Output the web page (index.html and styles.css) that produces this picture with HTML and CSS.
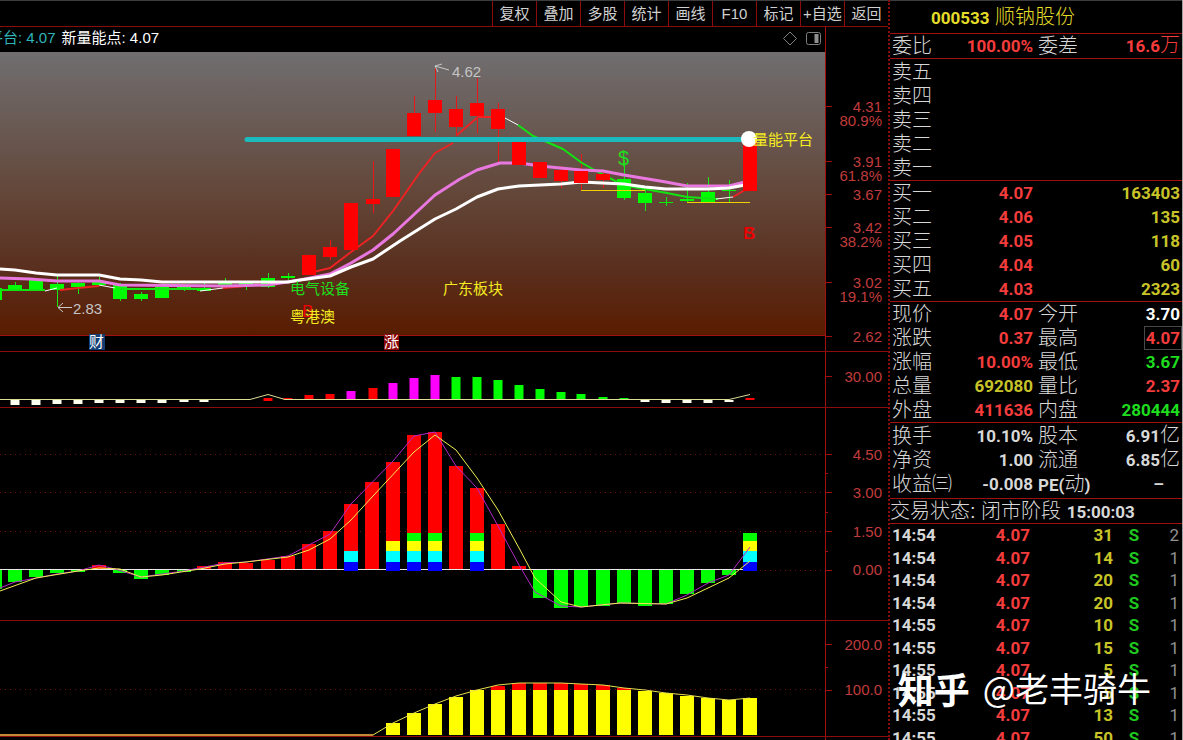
FILE: index.html
```html
<!DOCTYPE html>
<html lang="zh-CN">
<head>
<meta charset="utf-8">
<title>000533 顺钠股份</title>
<link rel="stylesheet" href="styles.css">
</head>
<body>
<div class="terminal">
  <main class="charts">
    <nav class="toolbar">
      <button type="button">复权</button>
      <button type="button">叠加</button>
      <button type="button">多股</button>
      <button type="button">统计</button>
      <button type="button">画线</button>
      <button type="button">F10</button>
      <button type="button">标记</button>
      <button type="button">+自选</button>
      <button type="button">返回</button>
    </nav>

    <section class="pane">
      <div class="plot legend">
        <div class="legend-text"><span class="teal">平台: 4.07</span><span class="bright">新量能点: 4.07</span></div>
        <svg class="legend-icons" width="40" height="16" viewBox="0 0 40 16" fill="none" stroke="#808080">
          <path d="M8 2L14.500 8.500L8 15L1.500 8.500Z"/>
          <rect x="24.500" y="2.500" width="14" height="12" rx="2"/>
          <path d="M34.500 4V13" stroke="#909090" stroke-width="4"/>
        </svg>
      </div>
      <div class="axis"></div>
    </section>

    <section class="pane ruled">
      <div class="plot">
        <svg class="price" viewBox="0 52 825 299" preserveAspectRatio="xMinYMin meet">
          <defs>
            <linearGradient id="sky" x1="0" y1="0" x2="0" y2="1">
              <stop offset="0" stop-color="#706e70"/>
              <stop offset="0.500" stop-color="#634739"/>
              <stop offset="0.750" stop-color="#5a3020"/>
              <stop offset="1" stop-color="#591c00"/>
            </linearGradient>
          </defs>
          <rect x="0" y="52" width="825" height="283" fill="url(#sky)"/>
          <path class="rule" d="M0 335.500H825"/>

          <path class="wick up" d="M330.500 240V260M373.500 161V213M414.500 96V136M435.500 68V132M456.500 96V136M477.500 78V133M498.500 103V163M561.500 166V188M581.500 154V191M603.500 172V188"/>
          <path class="wick down" d="M15.500 282V291M57.500 274V307M78.500 280V294M99.500 277V285M120.500 283V301M141.500 292V301M162.500 286V297M184.500 285V291M204.500 283V291M225.500 278V287M246.500 281V290M268.500 273V288M288.500 273V280M624.500 160V200M645.500 190V211M666.500 197V206M687.500 183V202M708.500 177V203M729.500 180V202"/>
          <path class="thin" stroke="#0e0" d="M659 202.500H673"/>
          <path class="candle" stroke="#0f0" d="M-5 288V300M15 285V291M36 280V291M57 284V290M78 283V287M99 282V285M120 285V299M141 294V299M162 287V298M184 287V290M204 288V291M225 282V285M246 283V285M268 278V287M288 276V278M624 179V198M645 193V203M687 199V201M708 192V202M729 190V191"/>

          <path class="ma" stroke="#e22" d="M309 273L330 268L351 252L373 236L393 211L418 175L435 153L453 143M457 135L478 117L497 117M60 290L78 288L99 286M223 288L246 286M733 197L745 190"/>
          <path class="ma" stroke="#12e412" d="M518 125L533 136L563 149L582 163L600 173L617 182L633 187L667 193L687 197L718 199M0 290H45M120 289H200"/>
          <path class="ma wide" stroke="#e878e0" d="M0 278L30 279L57 281H99L120 285L225 286L268 285L300 280L330 274L351 263L373 250L393 234L435 195L460 179L477 170L500 163H520L540 166L581 170L603 171L624 175L666 182L687 186H729L745 182"/>
          <path class="ma wide" stroke="#fff" d="M0 269L15 270L36 273L57 275H99L120 279L141 280L162 282H288L300 280L330 276L351 267L373 259L400 241L435 219L456 209L477 197L498 189L519 186L561 184L581 182L624 184L645 187L666 189H708L729 188L745 185"/>
          <path class="thin" stroke="#fff" d="M505 118L518 125M45 291L57 288M99 285L115 288M200 291L223 288M716 199L733 197"/>
          <path class="candle" stroke="#f00" d="M309 255V275M330 247V257M351 203V250M373 199V204M393 149V197M414 113V136M435 100V113M456 109V127M477 103V116M498 109V129M519 142V165M540 162V178M561 170V181M581 171V183M603 174V180M750 140V191"/>
          <path class="thin" stroke="#f0d000" d="M581 190.500H645M687 202.500H750"/>
          <path stroke="#1cbabd" stroke-width="5" stroke-linecap="round" d="M247 139.500H744"/>
          <circle cx="749" cy="139" r="8" fill="#fff"/>

          <path class="thin" stroke="#c8c8c8" d="M449 70L435 66M442 64L435 66L438 72M72 307.500H58M63 303L58 307.500L63 312"/>
          <text class="note silver" x="452" y="77">4.62</text>
          <text class="note silver" x="73" y="314">2.83</text>
          <text class="note yellow" x="753" y="145">量能平台</text>
          <text class="signal tall green" x="618" y="165">$</text>
          <text class="signal red" x="743" y="239">B</text>
          <text class="signal red" x="744" y="239">S</text>
          <text class="signal red" x="302" y="317">B</text>
          <text class="note green" x="290" y="294">电气设备</text>
          <text class="note yellow" x="290" y="322">粤港澳</text>
          <text class="note yellow" x="443" y="294">广东板块</text>
          <rect x="89" y="334" width="16" height="16" fill="#123e74"/>
          <text class="note bright" x="89" y="347">财</text>
          <rect x="384" y="334" width="15" height="16" fill="#8c0808"/>
          <text class="note bright" x="384" y="347">涨</text>
        </svg>
      </div>
      <div class="axis">
        <svg class="price" viewBox="0 52 62 299" preserveAspectRatio="xMaxYMin meet">
          <path class="rule" d="M0 106.500H6M0 161.500H6M0 194.500H6M0 227.500H6M0 282.500H6M0 336.500H6"/>
          <text class="tick" x="56" y="112">4.31</text>
          <text class="tick" x="56" y="126">80.9%</text>
          <text class="tick" x="56" y="167">3.91</text>
          <text class="tick" x="56" y="181">61.8%</text>
          <text class="tick" x="56" y="200">3.67</text>
          <text class="tick" x="56" y="233">3.42</text>
          <text class="tick" x="56" y="247">38.2%</text>
          <text class="tick" x="56" y="288">3.02</text>
          <text class="tick" x="56" y="302">19.1%</text>
          <text class="tick" x="56" y="342">2.62</text>
        </svg>
      </div>
    </section>

    <section class="pane ruled">
      <div class="plot">
        <svg class="energy" viewBox="0 352 825 55" preserveAspectRatio="xMinYMin meet">
          <path class="bar" stroke="#fffff0" d="M15 400V405M36 400V405M57 400V404M78 400V404M99 400V403M120 400V403M141 400V403M162 400V403M184 400V402M204 400V402M645 400V402M666 400V403M687 400V403M708 400V403M729 400V402"/>
          <path class="bar" stroke="#f00" d="M268 398V401M288 398V400M309 395V400M330 394V400M373 388V400M750 398V400"/>
          <path class="bar" stroke="#f0f" d="M351 391V400M393 383V400M414 378V400M435 375V400"/>
          <path class="bar" stroke="#0f0" d="M456 377V400M477 377V400M498 380V400M519 385V400M540 389V400M561 392V400M581 394V400M603 397V400M624 398V400"/>
          <path class="thin" stroke="#dcdc96" d="M0 399.500H250L268 394.500L285 399.500H729L750 394.500"/>
        </svg>
      </div>
      <div class="axis">
        <svg class="energy" viewBox="0 352 62 55" preserveAspectRatio="xMaxYMin meet">
          <path class="rule" d="M0 376.500H6"/>
          <text class="tick" x="56" y="382">30.00</text>
        </svg>
      </div>
    </section>

    <section class="pane ruled">
      <div class="plot">
        <svg class="momentum" viewBox="0 408 825 212" preserveAspectRatio="xMinYMin meet">
          <path class="grid" d="M0 454.500H825M0 492.500H825M0 531.500H825M750 570.500H825"/>
          <path class="candle" stroke="#f00" d="M99 565V570M204 566V570M225 562V570M246 563V570M268 560V570M288 556V570M309 544V570M330 531V570M351 504V570M372 482V570M393 462V570M414 435V570M435 432V570M456 466V570M477 488V570M498 524V570M519 566V570"/>
          <path class="candle" stroke="#0f0" d="M-5 570V589M15 570V582M36 570V577M57 570V573M78 570V572M120 570V573M141 570V579M162 570V575M184 570V572M540 570V598M561 570V608M581 570V607M603 570V606M624 570V603M645 570V606M666 570V604M687 570V594M708 570V583M729 570V575"/>
          <path class="thin" stroke="#e8e8e8" d="M0 569.500H750"/>
          <path class="candle" stroke="#00f" d="M351 562V571M393 562V571M414 562V571M435 562V571M477 562V571M750 562V571"/>
          <path class="candle" stroke="#0ff" d="M351 551V562M393 551V562M414 551V562M435 551V562M477 551V562M750 551V562"/>
          <path class="candle" stroke="#ff0" d="M393 541V551M414 541V551M435 541V551M477 541V551M750 541V551"/>
          <path class="candle" stroke="#0f0" d="M414 533V541M435 533V541M477 533V541M750 533V541"/>
          <path class="thin" stroke="#b428c8" d="M0 588L15 582L57 574L78 571L99 565L115 569L141 577L184 571L225 563L246 562L288 556L330 534L351 504L393 461L414 436L435 432L443 445L456 466L477 488L498 526L519 565L535 592L561 606L581 607L620 603L666 604L687 595L708 583L729 575L750 547"/>
          <path class="thin" stroke="#f0f050" d="M0 591L36 578L78 571L99 568L120 569L141 577L162 575L200 569L225 564L246 562L288 557L309 550L330 539L351 520L373 496L414 452L435 435L456 450L477 478L498 510L519 548L535 578L561 602L581 607L620 603L666 604L687 598L729 578L750 561"/>
        </svg>
      </div>
      <div class="axis">
        <svg class="momentum" viewBox="0 408 62 212" preserveAspectRatio="xMaxYMin meet">
          <path class="rule" d="M0 454.500H6M0 473.500H2M0 492.500H6M0 512.500H2M0 531.500H6M0 551.500H2M0 570.500H6"/>
          <text class="tick" x="56" y="460">4.50</text>
          <text class="tick" x="56" y="498">3.00</text>
          <text class="tick" x="56" y="537">1.50</text>
          <text class="tick" x="56" y="575">0.00</text>
        </svg>
      </div>
    </section>

    <section class="pane ruled">
      <div class="plot">
        <svg class="volume" viewBox="0 621 825 115" preserveAspectRatio="xMinYMin meet">
          <path class="grid" d="M0 689.500H825"/>
          <path class="candle" stroke="#f00" d="M498 686V690M519 683V690M540 683V690M561 683V690M581 684V690M603 685V690M624 688V690"/>
          <path class="candle" stroke="#ff0" d="M393 723V735M414 713V735M435 704V735M456 697V735M477 690V735M498 690V735M519 690V735M540 690V735M561 690V735M581 690V735M603 690V735M624 690V735M645 691V735M666 693V735M687 696V735M708 698V735M729 700V735M750 698V735"/>
          <path stroke="#c08a38" stroke-width="2" d="M0 735H373"/>
          <path class="thin" stroke="#e8e050" d="M373 735L393 723L414 713L435 704L456 696L477 690L498 685L519 683H561L581 684L603 685L624 688L645 690L666 693L687 695L708 698L729 700L750 698"/>
        </svg>
      </div>
      <div class="axis">
        <svg class="volume" viewBox="0 621 62 115" preserveAspectRatio="xMaxYMin meet">
          <path class="rule" d="M0 644.500H6M0 667.500H2M0 690.500H6"/>
          <text class="tick" x="56" y="650">200.0</text>
          <text class="tick" x="56" y="695">100.0</text>
        </svg>
      </div>
    </section>
    <section class="pane rest">
      <div class="plot"></div>
      <div class="axis"></div>
    </section>
  </main>

  <aside class="quote">
    <h1 class="stock"><span class="num">000533</span> 顺钠股份</h1>

    <table class="facts">
      <colgroup><col class="c-label"><col class="c-value"><col class="c-label2"><col></colgroup>
      <tbody>
        <tr><th>委比</th><td class="rise">100.00%</td><th>委差</th><td class="rise">16.6<span class="unit">万</span></td></tr>
      </tbody>
    </table>

    <table class="facts sell">
      <tbody>
        <tr><th>卖五</th></tr>
        <tr><th>卖四</th></tr>
        <tr><th>卖三</th></tr>
        <tr><th>卖二</th></tr>
        <tr><th>卖一</th></tr>
      </tbody>
    </table>

    <table class="facts">
      <colgroup><col class="c-label"><col class="c-value"><col></colgroup>
      <tbody>
        <tr><th>买一</th><td class="rise">4.07</td><td class="vol">163403</td></tr>
        <tr><th>买二</th><td class="rise">4.06</td><td class="vol">135</td></tr>
        <tr><th>买三</th><td class="rise">4.05</td><td class="vol">118</td></tr>
        <tr><th>买四</th><td class="rise">4.04</td><td class="vol">60</td></tr>
        <tr><th>买五</th><td class="rise">4.03</td><td class="vol">2323</td></tr>
      </tbody>
    </table>

    <table class="facts">
      <colgroup><col class="c-label"><col class="c-value"><col class="c-label2"><col></colgroup>
      <tbody>
        <tr><th>现价</th><td class="rise">4.07</td><th>今开</th><td class="white">3.70</td></tr>
        <tr><th>涨跌</th><td class="rise">0.37</td><th>最高</th><td class="rise"><span class="boxed">4.07</span></td></tr>
        <tr><th>涨幅</th><td class="rise">10.00%</td><th>最低</th><td class="fall">3.67</td></tr>
        <tr><th>总量</th><td class="vol">692080</td><th>量比</th><td class="rise">2.37</td></tr>
        <tr><th>外盘</th><td class="rise">411636</td><th>内盘</th><td class="fall">280444</td></tr>
      </tbody>
    </table>

    <table class="facts finance">
      <colgroup><col class="c-label"><col class="c-value"><col class="c-label2"><col></colgroup>
      <tbody>
        <tr><th>换手</th><td>10.10%</td><th>股本</th><td>6.91<span class="unit">亿</span></td></tr>
        <tr><th>净资</th><td>1.00</td><th>流通</th><td>6.85<span class="unit">亿</span></td></tr>
        <tr><th>收益㈢</th><td>-0.008</td><th><span class="num">PE(</span>动<span class="num">)</span></th><td class="none">–</td></tr>
      </tbody>
    </table>

    <p class="status">交易状态: 闭市阶段 <span class="num">15:00:03</span></p>

    <table class="ticks">
      <colgroup><col class="t-time"><col class="t-price"><col class="t-vol"><col class="t-side"><col></colgroup>
      <tbody>
        <tr><td>14:54</td><td>4.07</td><td>31</td><td>S</td><td>2</td></tr>
        <tr><td>14:54</td><td>4.07</td><td>14</td><td>S</td><td>1</td></tr>
        <tr><td>14:54</td><td>4.07</td><td>20</td><td>S</td><td>1</td></tr>
        <tr><td>14:54</td><td>4.07</td><td>20</td><td>S</td><td>1</td></tr>
        <tr><td>14:55</td><td>4.07</td><td>10</td><td>S</td><td>1</td></tr>
        <tr><td>14:55</td><td>4.07</td><td>15</td><td>S</td><td>1</td></tr>
        <tr><td>14:55</td><td>4.07</td><td>5</td><td>S</td><td>1</td></tr>
        <tr><td>14:55</td><td>4.07</td><td>5</td><td>S</td><td>1</td></tr>
        <tr><td>14:55</td><td>4.07</td><td>13</td><td>S</td><td>1</td></tr>
        <tr><td>14:55</td><td>4.07</td><td>50</td><td>S</td><td>1</td></tr>
      </tbody>
    </table>
    <div class="watermark"><span class="brand">知乎</span><span>@老丰骑牛</span></div>
  </aside>
</div>
</body>
</html>
```
FILE: styles.css
```css
* { box-sizing: border-box; }

body {
  margin: 0;
  background: #000;
  color: #d8d8d8;
  font-family: "Liberation Sans", "Noto Sans CJK SC", sans-serif;
  font-size: 15px;
}

.terminal {
  display: grid;
  grid-template-columns: minmax(0, 1fr) 295px;
  height: 100vh;
  overflow: hidden;
  box-shadow: inset 0 1px #3c3c3c;
}

.charts {
  display: flex;
  flex-direction: column;
  min-height: 0;
}

/* Toolbar */
.toolbar {
  display: flex;
  justify-content: flex-end;
  flex: none;
  height: 27px;
  padding-top: 1px;
  border-bottom: 1px solid #8a0c0c;
}
.toolbar button {
  width: 44px;
  padding: 0;
  border: 0;
  border-left: 1px solid #8a0c0c;
  background: none;
  color: #d0d0d0;
  font: 400 15px/24px "Liberation Sans", "Noto Sans CJK SC", sans-serif;
  white-space: nowrap;
}

/* Chart panes */
.pane {
  display: grid;
  grid-template-columns: minmax(0, 1fr) 62px;
  flex: none;
}
.plot { border-right: 1px solid #a01010; }
.ruled { border-bottom: 1px solid #8a0c0c; }
.rest { flex: 1; }

.pane svg { display: block; overflow: hidden; }
.price, .energy, .momentum, .volume { width: 100%; }
.price { height: 299px; }
.energy { height: 55px; }
.momentum { height: 212px; }
.volume { height: 115px; }

.legend {
  display: flex;
  justify-content: space-between;
  align-items: center;
  height: 25px;
  padding: 0 3px 4px 0;
  overflow: hidden;
}
.legend-text {
  display: flex;
  gap: 6px;
  margin-left: -12px;
  line-height: 20px;
  white-space: nowrap;
}
.teal { color: #2fb4b8; }
.bright { color: #fff; fill: #fff; }

.rule { stroke: #a01010; fill: none; }
.grid { stroke: #701010; stroke-dasharray: 1 4; fill: none; }
.candle { stroke-width: 14; fill: none; }
.bar { stroke-width: 9; fill: none; }
.wick { stroke-width: 1; fill: none; }
.up { stroke: #e81818; }
.down { stroke: #18e818; }
.thin { stroke-width: 1; fill: none; }
.ma { stroke-width: 2; fill: none; stroke-linejoin: round; }
.wide { stroke-width: 3; }

.note { font-size: 15px; }
.tick { font-size: 15px; fill: #c03c3c; text-anchor: end; }
.signal { font-size: 17px; }
.tall { font-size: 20px; }
.silver { fill: #c4c4c4; }
.yellow { fill: #f4ec20; }
.green { fill: #1edc1e; }
.red { fill: #f00000; }

/* Quote panel */
.quote {
  position: relative;
  min-width: 0;
  overflow: hidden;
  border-left: 2px dotted #8a0c0c;
  border-right: 1px solid #a0a0a0;
  font-size: 20px;
  font-weight: 300;
}
.num, .facts td, .ticks td {
  font-family: Roboto, "Noto Sans CJK SC", sans-serif;
  font-size: 17px;
  font-weight: 700;
}
.num, .unit { line-height: 1; }
.facts .unit { font-size: 20px; font-weight: 300; }

.stock {
  height: 34px;
  margin: 0;
  padding-left: 41px;
  border-bottom: 1px solid #a01010;
  color: #e4dc28;
  font-size: 20px;
  font-weight: 300;
  line-height: 34px;
}

.facts {
  width: 100%;
  table-layout: fixed;
  border-collapse: separate;
  border-spacing: 0;
  border-bottom: 1px solid #a01010;
}
.facts th {
  height: 24px;
  padding: 0 0 0 2px;
  font-size: 20px;
  font-weight: 300;
  line-height: 24px;
  text-align: left;
  white-space: nowrap;
}
.facts td {
  height: 24px;
  padding: 0;
  line-height: 24px;
  text-align: right;
  white-space: nowrap;
}
.facts td + th { padding-left: 5px; }
.facts td:last-child { padding-right: 2px; }
.c-label { width: 46px; }
.c-value { width: 97px; }
.c-label2 { width: 50px; }
.sell { padding-top: 1px; }
.finance { padding: 1px 0 2px; }
.facts td.none { padding-right: 18px; }

.facts .rise { color: #f43c3c; }
.facts .fall { color: #1edc1e; }
.facts .vol { color: #c8c428; }
.facts .white { color: #fff; }
.boxed { outline: 1px solid #484848; outline-offset: 1px; }

.status {
  height: 25px;
  margin: 0;
  border-bottom: 1px solid #a01010;
  line-height: 24px;
  white-space: nowrap;
}

.ticks {
  width: 100%;
  table-layout: fixed;
  border-collapse: separate;
  border-spacing: 0;
}
.ticks td {
  height: 22px;
  padding: 0;
  line-height: 22px;
  text-align: right;
}
.ticks tr:nth-child(even) td { height: 23px; }
.ticks td:first-child { padding-left: 2px; text-align: left; }
.ticks td:nth-child(2) { color: #f43c3c; }
.ticks td:nth-child(3) { color: #c8c428; }
.ticks td:nth-child(4) { color: #1ec81e; text-align: center; }
.ticks td:last-child { padding-right: 3px; color: #909090; font-weight: 400; }
.t-time { width: 60px; }
.t-price { width: 80px; }
.t-vol { width: 83px; }
.t-side { width: 42px; }

.watermark {
  position: absolute;
  right: 31px;
  bottom: 28px;
  display: flex;
  align-items: center;
  gap: 13px;
  color: #fff;
  font-family: "Noto Sans CJK SC", sans-serif;
  font-size: 34px;
  font-weight: 400;
  line-height: 48px;
  white-space: nowrap;
}
.brand { font-size: 36px; font-weight: 700; }
```
